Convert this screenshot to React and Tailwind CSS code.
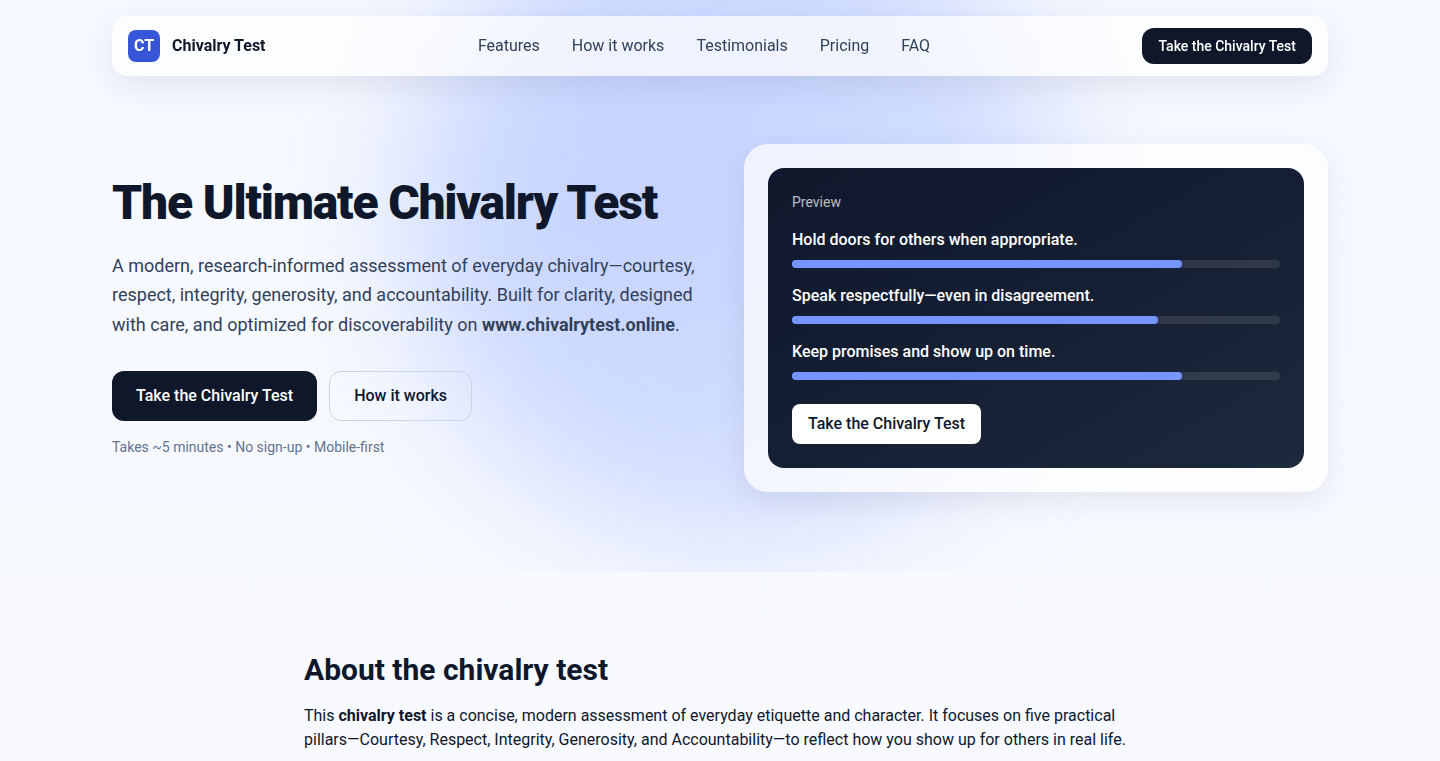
const NAV_LINKS = [
  { label: "Features", href: "#features" },
  { label: "How it works", href: "#how" },
  { label: "Testimonials", href: "#testimonials" },
  { label: "Pricing", href: "#pricing" },
  { label: "FAQ", href: "#faq" },
];

const PREVIEW = [
  { text: "Hold doors for others when appropriate.", value: 80 },
  { text: "Speak respectfully—even in disagreement.", value: 75 },
  { text: "Keep promises and show up on time.", value: 80 },
];

function Header() {
  return (
    <header className="sticky top-0 z-50 pt-4">
      <div className="max-w-7xl mx-auto px-8">
        <div className="flex items-center justify-between rounded-2xl bg-white/70 px-4 py-3 backdrop-blur shadow-[0_10px_30px_rgba(2,6,23,0.08)]">
          <a href="#top" className="flex items-center gap-3">
            <span className="grid h-8 w-8 place-items-center rounded-lg bg-[#3655d9] font-bold text-white">
              CT
            </span>
            <span className="font-bold">Chivalry Test</span>
          </a>
          <nav className="flex items-center gap-8 text-slate-700">
            {NAV_LINKS.map((link) => (
              <a key={link.href} href={link.href} className="hover:text-slate-900">
                {link.label}
              </a>
            ))}
          </nav>
          <a
            href="#test"
            className="rounded-xl bg-slate-900 px-4 py-2 text-sm font-medium text-white hover:bg-slate-800"
          >
            Take the Chivalry Test
          </a>
        </div>
      </div>
    </header>
  );
}

function PreviewCard() {
  return (
    <div className="rounded-3xl bg-white/70 p-6 backdrop-blur shadow-[0_10px_30px_rgba(2,6,23,0.08)]">
      <div className="rounded-2xl bg-linear-to-br from-slate-900 to-slate-800 p-6 text-white">
        <p className="text-sm opacity-70">Preview</p>
        <ul className="mt-4 space-y-4">
          {PREVIEW.map((item) => (
            <li key={item.text}>
              <p className="font-medium">{item.text}</p>
              <div className="mt-2 h-2 rounded bg-white/10">
                <div
                  className="h-2 rounded bg-[#7595ff]"
                  style={{ width: `${item.value}%` }}
                />
              </div>
            </li>
          ))}
        </ul>
        <a
          href="#test"
          className="mt-6 inline-flex rounded-lg bg-white px-4 py-2 font-medium text-slate-900"
        >
          Take the Chivalry Test
        </a>
      </div>
    </div>
  );
}

function Hero() {
  return (
    <section className="relative -mt-19 overflow-hidden pt-19">
      {/* soft glow behind the hero */}
      <div
        aria-hidden="true"
        className="absolute -top-28 left-1/2 ml-4 h-[660px] w-[660px] -translate-x-1/2 rounded-full bg-[radial-gradient(circle_at_38%_42%,#a2b8ff,#c0d0ff_70%)] opacity-60 blur-3xl"
      />
      <div className="relative mx-auto grid max-w-7xl grid-cols-2 items-center gap-12 px-8 pt-17 pb-20">
        <div>
          <h1 className="text-5xl font-black tracking-tight">
            The Ultimate Chivalry Test
          </h1>
          <p className="mt-6 text-lg leading-relaxed text-slate-700">
            A modern, research-informed assessment of everyday chivalry—courtesy,
            respect, integrity, generosity, and accountability. Built for clarity,
            designed with care, and optimized for discoverability on{" "}
            <strong>www.chivalrytest.online</strong>.
          </p>
          <div className="mt-8 flex gap-3">
            <a
              href="#test"
              className="flex items-center rounded-xl bg-slate-900 px-6 py-3 font-medium text-white hover:bg-slate-800"
            >
              Take the Chivalry Test
            </a>
            <a
              href="#how"
              className="rounded-xl border border-slate-300 px-6 py-3 font-medium hover:bg-white"
            >
              How it works
            </a>
          </div>
          <p className="mt-4 text-sm text-slate-500">
            Takes ~5 minutes • No sign-up • Mobile-first
          </p>
        </div>
        <PreviewCard />
      </div>
    </section>
  );
}

function About() {
  return (
    <section className="mx-auto max-w-4xl px-8 py-20">
      <h2 className="text-3xl font-bold">About the chivalry test</h2>
      <p className="mt-4">
        This <strong>chivalry test</strong> is a concise, modern assessment of
        everyday etiquette and character. It focuses on five practical
        pillars—Courtesy, Respect, Integrity, Generosity, and Accountability—to
        reflect how you show up for others in real life.
      </p>
    </section>
  );
}

function App() {
  return (
    <div
      id="top"
      className="min-h-screen bg-linear-to-b from-[#f5f8ff] to-[#f8faff] font-[Roboto,sans-serif] text-slate-900 antialiased"
    >
      <Header />
      <main>
        <Hero />
        <About />
      </main>
    </div>
  );
}

export default App;
